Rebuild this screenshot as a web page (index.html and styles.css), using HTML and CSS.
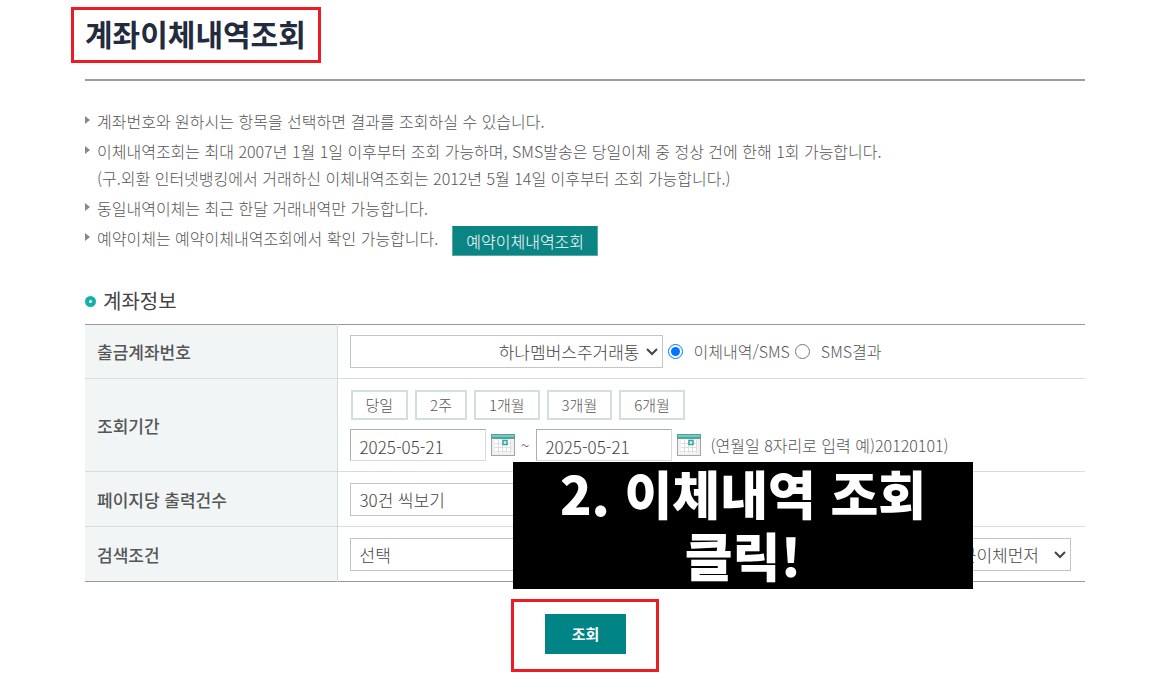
FILE: index.html
```html
<!DOCTYPE html>
<html lang="ko">
<head>
<meta charset="utf-8">
<meta name="viewport" content="width=device-width, initial-scale=1">
<title>계좌이체내역조회</title>
<link rel="stylesheet" href="styles.css">
</head>
<body>
<svg width="0" height="0" class="defs" aria-hidden="true">
  <symbol id="calendar" viewBox="0 0 24 22">
    <rect width="24" height="22" fill="#a3a3a3"/>
    <rect x="1" y="4" width="22" height="17" fill="#f1f1f1"/>
    <rect width="24" height="5" fill="#4fa59e"/>
    <rect x="1" y="1" width="22" height="2" fill="#7cc6c0"/>
    <rect x="4" y="6" width="16" height="13" fill="#fff"/>
    <path d="M4 9.500H20M4 13.500H20M4 17.500H20M7.500 6V19M11.500 6V19M15.500 6V19M19.500 6V19" stroke="#dedede" fill="none"/>
    <rect x="12" y="6.500" width="4" height="4" fill="#d9f5f2" stroke="#36a59d" stroke-width="1.500"/>
  </symbol>
</svg>
<main class="page">
  <header class="page-head">
    <h1 class="title">계좌이체내역조회</h1>
  </header>

  <ul class="notes">
    <li>계좌번호와 원하시는 항목을 선택하면 결과를 조회하실 수 있습니다.</li>
    <li>이체내역조회는 최대 2007년 1월 1일 이후부터 조회 가능하며, SMS발송은 당일이체 중 정상 건에 한해 1회 가능합니다.<br>(구.외환 인터넷뱅킹에서 거래하신 이체내역조회는 2012년 5월 14일 이후부터 조회 가능합니다.)</li>
    <li>동일내역이체는 최근 한달 거래내역만 가능합니다.</li>
    <li class="with-button"><span>예약이체는 예약이체내역조회에서 확인 가능합니다.</span><button type="button" class="reserve">예약이체내역조회</button></li>
  </ul>

  <h2 class="section-title">계좌정보</h2>

  <form>
    <div class="form-area">
      <table class="form-table">
        <tbody>
          <tr>
            <th scope="row"><label for="account">출금계좌번호</label></th>
            <td>
              <div class="line">
                <select id="account" class="field account"><option>하나멤버스주거래통</option></select>
                <input type="radio" name="kind" id="kind-all" checked><label for="kind-all">이체내역/SMS</label>
                <input type="radio" name="kind" id="kind-sms"><label for="kind-sms">SMS결과</label>
              </div>
            </td>
          </tr>
          <tr>
            <th scope="row"><label for="from">조회기간</label></th>
            <td>
              <div class="periods">
                <button type="button">당일</button>
                <button type="button">2주</button>
                <button type="button">1개월</button>
                <button type="button">3개월</button>
                <button type="button">6개월</button>
              </div>
              <div class="line dates">
                <input type="text" id="from" class="field date" value="2025-05-21">
                <button type="button" class="cal" aria-label="시작일 선택"><svg><use href="#calendar"/></svg></button>
                <span class="tilde">~</span>
                <input type="text" class="field date" value="2025-05-21" aria-label="종료일">
                <button type="button" class="cal" aria-label="종료일 선택"><svg><use href="#calendar"/></svg></button>
                <span class="hint">(연월일 8자리로 입력 예)20120101)</span>
              </div>
            </td>
          </tr>
          <tr>
            <th scope="row"><label for="count">페이지당 출력건수</label></th>
            <td><div class="line"><select id="count" class="field count"><option>30건 씩보기</option></select></div></td>
          </tr>
          <tr>
            <th scope="row"><label for="cond">검색조건</label></th>
            <td>
              <div class="line search">
                <select id="cond" class="field cond"><option>선택</option></select>
                <select class="field order" aria-label="정렬"><option>최근이체먼저</option></select>
              </div>
            </td>
          </tr>
        </tbody>
      </table>
      <p class="callout">2. 이체내역 조회<br>클릭!</p>
    </div>
    <div class="submit-frame">
      <button type="submit" class="submit">조회</button>
    </div>
  </form>
</main>
</body>
</html>
```
FILE: styles.css
```css
*, *::before { box-sizing: border-box; }

body {
  margin: 0;
  background: #fff;
  color: #555;
  font: 300 16px/27px "Noto Sans CJK KR", sans-serif;
}

button, input, select { font: inherit; color: inherit; }

.defs { position: absolute; }

.page { padding: 7px 88px 12px 85px; }

.page-head {
  border-bottom: 2px solid #9d9d9d;
  padding-bottom: 16px;
}

.title {
  width: max-content;
  margin: 0 0 0 -14px;
  padding: 3px 12px 7px 11px;
  border: 3px solid #ed1c24;
  color: #232b3e;
  font-size: 30px;
  font-weight: 700;
  line-height: 40px;
}

.notes {
  list-style: none;
  margin: 27px 0 0;
  padding: 0;
}

.notes li {
  position: relative;
  padding-left: 12px;
  margin-bottom: 3px;
}

.notes li::before {
  content: "";
  position: absolute;
  left: 0;
  top: 8px;
  border: solid transparent;
  border-width: 4px 0 4px 5px;
  border-left-color: #888;
}

.notes .with-button {
  display: flex;
  align-items: flex-start;
  gap: 14px;
}

.reserve {
  height: 30px;
  margin-top: 1px;
  padding: 0 13px;
  border: 1px solid #58aaa9;
  border-top-color: #0b8584;
  background: #0b8584;
  color: #fff;
  line-height: 26px;
}

.section-title {
  display: flex;
  align-items: center;
  gap: 7px;
  margin: 30px 0 8px;
  color: #444;
  font-size: 20px;
  font-weight: 400;
  line-height: 30px;
}

.section-title::before {
  content: "";
  width: 11px;
  height: 11px;
  border: 4px solid #12b0ae;
  border-radius: 50%;
}

.form-area { position: relative; }

.form-table {
  width: 100%;
  border-collapse: collapse;
  border-top: 1px solid #999;
  border-bottom: 1px solid #999;
}

.form-table th {
  width: 252px;
  padding: 0 12px;
  border-right: 1px solid #d5dadb;
  background: #f1f5f6;
  font-size: 17px;
  font-weight: 500;
  text-align: left;
}

.form-table td { padding: 11px 12px 10px; }

.form-table tr:first-child td { padding-top: 10px; }

.form-table tr + tr { border-top: 1px solid #d9dcdc; }

.line {
  display: flex;
  align-items: center;
}

.line input[type="radio"] {
  width: 15px;
  height: 15px;
  margin: 0 11px 0 5px;
}

.field {
  height: 33px;
  padding: 0 9px;
  border: 1px solid #c4c4c4;
  border-radius: 0;
  background: #fff;
  color: #444;
  font-size: 17px;
}

select.field {
  appearance: none;
  padding-right: 22px;
  background: #fff url("data:image/svg+xml,%3Csvg xmlns='http://www.w3.org/2000/svg' width='12' height='8'%3E%3Cpath d='M1 1l5 5 5-5' fill='none' stroke='%23444' stroke-width='2'/%3E%3C/svg%3E") no-repeat right 4px center;
}

.account {
  width: 313px;
  text-align-last: right;
}

.periods {
  display: flex;
  gap: 7px;
  padding-left: 1px;
}

.periods button {
  height: 30px;
  padding: 0 13px;
  border: 2px solid #d3dfde;
  background: #fff;
  font-size: 15px;
  line-height: 24px;
}

.dates { margin-top: 9px; gap: 5px; }

.date {
  width: 136px;
  height: 32px;
  padding: 2px 9px 0;
  border-color: #adadad #dadada #dadada #adadad;
}

.cal {
  width: 24px;
  height: 22px;
  padding: 0;
  border: 0;
  background: none;
}

.cal svg {
  display: block;
  width: 24px;
  height: 22px;
}

.tilde { width: 11px; text-align: center; }

.hint { margin-left: 5px; }

.count { width: 200px; }

.search { justify-content: space-between; padding-right: 2px; }

.cond { width: 200px; }

.order { width: 160px; }

select.order {
  padding-right: 31px;
  text-align-last: right;
}

.callout {
  position: absolute;
  left: 428px;
  top: 138px;
  width: 460px;
  height: 127px;
  margin: 0;
  background: #000;
  color: #fff;
  font-size: 52px;
  font-weight: 900;
  line-height: 62px;
  text-align: center;
}

.submit-frame {
  width: max-content;
  margin: 17px auto 0;
  padding: 12px 30px 15px 31px;
  border: 3px solid #ed1c24;
}

.submit {
  display: block;
  height: 40px;
  padding: 0 27px 2px;
  border: 0;
  background: #008485;
  color: #fff;
  font-size: 15px;
  font-weight: 700;
}
```
